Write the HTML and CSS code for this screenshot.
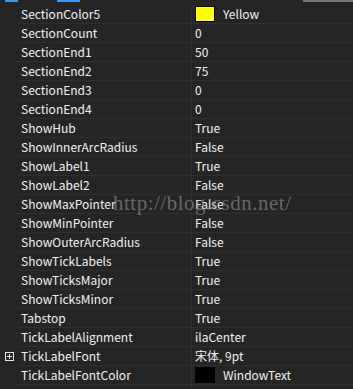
FILE: index.html
```html
<!DOCTYPE html>
<html lang="en">
<head>
    <meta charset="UTF-8">
    <title>Properties</title>
    <link rel="stylesheet" href="styles.css">
</head>
<body>

<div class="topbar">
    <span class="tab tab-a"></span>
    <span class="tab tab-b"></span>
    <span class="grip"></span>
</div>

<div class="grid">
    <div class="row"><div class="margin"></div><div class="name">SectionColor5</div><div class="value"><span class="swatch yellow"></span>Yellow</div></div>
    <div class="row"><div class="margin"></div><div class="name">SectionCount</div><div class="value">0</div></div>
    <div class="row"><div class="margin"></div><div class="name">SectionEnd1</div><div class="value">50</div></div>
    <div class="row"><div class="margin"></div><div class="name">SectionEnd2</div><div class="value">75</div></div>
    <div class="row"><div class="margin"></div><div class="name">SectionEnd3</div><div class="value">0</div></div>
    <div class="row"><div class="margin"></div><div class="name">SectionEnd4</div><div class="value">0</div></div>
    <div class="row"><div class="margin"></div><div class="name">ShowHub</div><div class="value">True</div></div>
    <div class="row"><div class="margin"></div><div class="name">ShowInnerArcRadius</div><div class="value">False</div></div>
    <div class="row"><div class="margin"></div><div class="name">ShowLabel1</div><div class="value">True</div></div>
    <div class="row"><div class="margin"></div><div class="name">ShowLabel2</div><div class="value">False</div></div>
    <div class="row"><div class="margin"></div><div class="name">ShowMaxPointer</div><div class="value">False</div></div>
    <div class="row"><div class="margin"></div><div class="name">ShowMinPointer</div><div class="value">False</div></div>
    <div class="row"><div class="margin"></div><div class="name">ShowOuterArcRadius</div><div class="value">False</div></div>
    <div class="row"><div class="margin"></div><div class="name">ShowTickLabels</div><div class="value">True</div></div>
    <div class="row"><div class="margin"></div><div class="name">ShowTicksMajor</div><div class="value">True</div></div>
    <div class="row"><div class="margin"></div><div class="name">ShowTicksMinor</div><div class="value">True</div></div>
    <div class="row"><div class="margin"></div><div class="name">Tabstop</div><div class="value">True</div></div>
    <div class="row"><div class="margin"></div><div class="name">TickLabelAlignment</div><div class="value">ilaCenter</div></div>
    <div class="row"><div class="margin"><span class="expander"></span></div><div class="name">TickLabelFont</div><div class="value">宋体, 9pt</div></div>
    <div class="row"><div class="margin"></div><div class="name">TickLabelFontColor</div><div class="value"><span class="swatch black"></span>WindowText</div></div>
    <div class="row"><div class="margin"></div><div class="name"></div><div class="value"></div></div>
</div>

<div class="watermark">http://blog.csdn.net/</div>

</body>
</html>
```

FILE: styles.css
```css
body {
    margin: 0;
    background-color: #252526;
    font-family: "Noto Sans CJK SC", "Open Sans", sans-serif;
    font-size: 12px;
    color: #f1f1f1;
    overflow: hidden;
    position: relative;
    height: 389px;
}
.topbar {
    height: 5px;
    position: relative;
    background-color: #252526;
}
.tab {
    position: absolute;
    top: 0;
    height: 2px;
    background-color: #3399ff;
}
.tab-a {
    left: 5px;
    width: 13px;
}
.tab-b {
    left: 57px;
    width: 23px;
}
.grip {
    position: absolute;
    top: 0;
    right: 0;
    width: 50px;
    height: 2px;
    background-color: #77777a;
}
.row {
    display: grid;
    grid-template-columns: 17px 175px 1fr;
    height: 19px;
}
.margin {
    background-color: #252526;
    display: flex;
    align-items: center;
    justify-content: center;
}
.name,
.value {
    background-color: #252526;
    border-bottom: 1px solid #2f2f32;
    line-height: 18px;
    white-space: nowrap;
    overflow: hidden;
}
.name {
    padding-left: 4px;
    border-right: 1px solid #2f2f32;
}
.value {
    padding-left: 3px;
    display: flex;
    align-items: center;
}
.swatch {
    width: 18px;
    height: 14px;
    margin-right: 8px;
    flex-shrink: 0;
}
.yellow {
    background-color: #ffff00;
    border: 1px solid #000;
}
.black {
    background-color: #000;
    border: 1px solid #000;
    margin-left: 0;
}
.expander {
    width: 7px;
    height: 7px;
    border: 1px solid #e6e6e6;
    position: relative;
    margin-left: 2px;
}
.expander::before,
.expander::after {
    content: "";
    position: absolute;
    background-color: #e6e6e6;
}
.expander::before {
    left: 1px;
    top: 3px;
    width: 5px;
    height: 1px;
}
.expander::after {
    left: 3px;
    top: 1px;
    width: 1px;
    height: 5px;
}
.watermark {
    position: absolute;
    left: 113px;
    top: 191px;
    font-family: "Liberation Serif", serif;
    font-size: 21px;
    color: rgba(160, 160, 160, 0.55);
    letter-spacing: 0.5px;
}
```
